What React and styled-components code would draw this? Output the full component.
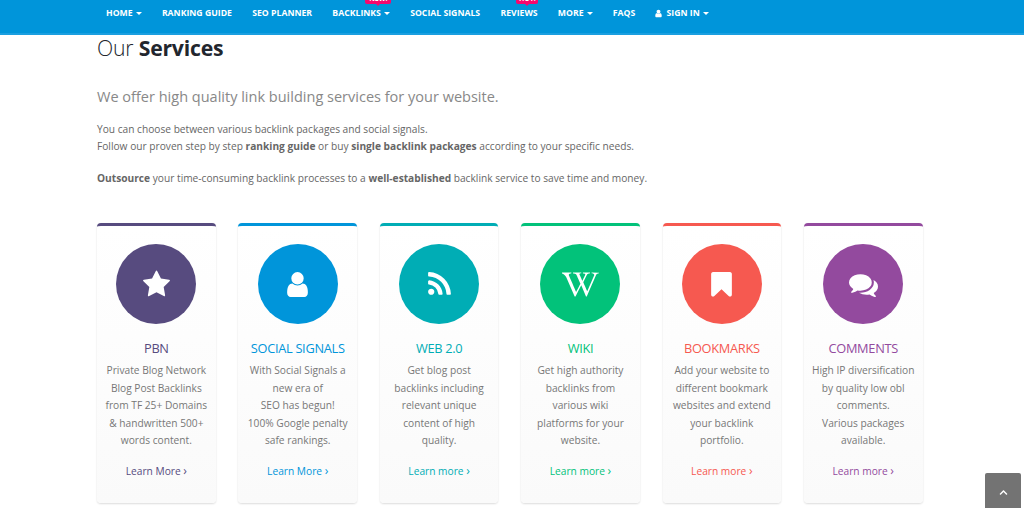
import React from 'react';
import styled, { createGlobalStyle } from 'styled-components';
import { FaWikipediaW, FaChevronUp } from 'react-icons/fa';

const GlobalStyle = createGlobalStyle`
  html, body {
    margin: 0;
    padding: 0;
    height: 508px;
    overflow: hidden;
    background: #fff;
    font-family: "Open Sans", "Liberation Sans", sans-serif;
  }
`;

const Page = styled.div`
  position: relative;
  height: 508px;
  overflow: hidden;
`;

const Navbar = styled.nav`
  height: 33px;
  background: #0095da;
  border-bottom: 2px solid #1a9fe0;
  display: flex;
  gap: 20.25px;
  padding-left: 106px;
`;

const NavItem = styled.a`
  position: relative;
  display: flex;
  align-items: center;
  gap: 3px;
  height: 26px;
  font-size: 8.7px;
  font-weight: 700;
  color: #fff;
  text-transform: uppercase;
  white-space: nowrap;
`;

const Caret = styled.span`
  width: 0;
  height: 0;
  border-left: 3px solid transparent;
  border-right: 3px solid transparent;
  border-top: 3px solid #fff;
`;

const UserIcon = styled.span`
  display: flex;
  margin: 0 1px 0 -2px;
`;

const Badge = styled.span`
  position: absolute;
  top: -7px;
  left: ${(p) => p.$left}px;
  width: ${(p) => p.$width}px;
  height: 11px;
  border-radius: 2px;
  background: #f5086e;
  color: #fff;
  font-size: 7px;
  line-height: 11px;
  text-align: center;

  &::after {
    content: '';
    position: absolute;
    left: 50%;
    bottom: -2px;
    margin-left: -2px;
    border-left: 2px solid transparent;
    border-right: 2px solid transparent;
    border-top: 2px solid #f5086e;
  }
`;

const Content = styled.main`
  padding: 0 101px 0 97px;
`;

const Title = styled.h1`
  margin: 0;
  font-size: 21.2px;
  line-height: 25px;
  font-weight: 300;
  color: #22262e;
  letter-spacing: -0.2px;

  strong {
    font-weight: 700;
  }
`;

const Lead = styled.p`
  margin: 26px 0 0;
  font-size: 14.53px;
  line-height: 20px;
  font-weight: 400;
  color: #888;
`;

const Text = styled.p`
  margin: ${(p) => p.$top}px 0 0;
  font-size: 10.18px;
  line-height: 17px;
  color: #666;

  strong {
    font-weight: 700;
  }
`;

const CardGrid = styled.div`
  display: grid;
  grid-template-columns: repeat(6, 118.7px);
  column-gap: 22.7px;
  margin-top: 36px;
`;

const Card = styled.article`
  height: 280px;
  box-sizing: border-box;
  display: flex;
  flex-direction: column;
  align-items: center;
  padding-top: 18px;
  border-top: 3px solid ${(p) => p.$color};
  border-radius: 4px;
  background: linear-gradient(#fff, #fafafa);
  box-shadow: 0 1px 2px rgba(0, 0, 0, 0.14);
  color: ${(p) => p.$color};
`;

const Circle = styled.div`
  width: 80px;
  height: 80px;
  flex: none;
  border-radius: 50%;
  background: ${(p) => p.$color};
  color: #fff;
  display: flex;
  align-items: center;
  justify-content: center;
`;

const CardTitle = styled.h3`
  margin: 15px 0 0;
  font-size: 12.8px;
  line-height: 18px;
  font-weight: 400;
  letter-spacing: -0.3px;
  white-space: nowrap;
`;

const CardText = styled.p`
  margin: 5px 0 0;
  width: 118px;
  font-size: 10.2px;
  line-height: 17.5px;
  color: #777;
  text-align: center;
  white-space: pre-line;
`;

const LearnLink = styled.a`
  margin-top: 14px;
  font-size: 10.2px;
  line-height: 14px;
  white-space: nowrap;
`;

const Arrow = styled.span`
  font-size: 12px;
`;

const BackToTop = styled.a`
  position: absolute;
  right: 3px;
  bottom: 0;
  width: 36px;
  height: 35px;
  box-sizing: border-box;
  padding-top: 3px;
  border-radius: 2px 2px 0 0;
  background: #737373;
  color: #fff;
  display: flex;
  align-items: center;
  justify-content: center;
  font-size: 9px;
`;

// Font Awesome 4 glyphs, the package only ships the newer, rounder ones
const Glyph = ({ d, size = 29 }) => (
  <svg width={size} height={size} viewBox="0 0 1792 1792" fill="currentColor">
    <path d={d} />
  </svg>
);

const userPath = 'M1536 1399q0 109-62.5 187t-150.5 78h-854q-88 0-150.5-78t-62.5-187q0-85 8.5-160.5t31.5-152 58.5-131 94-89 134.5-34.5q131 128 313 128t313-128q76 0 134.5 34.5t94 89 58.5 131 31.5 152 8.5 160.5zm-256-887q0 159-112.5 271.5t-271.5 112.5-271.5-112.5-112.5-271.5 112.5-271.5 271.5-112.5 271.5 112.5 112.5 271.5z';
const starPath = 'M1728 647q0 22-26 48l-363 354 86 500q1 7 1 20 0 21-10.5 35.5t-30.5 14.5q-19 0-40-12l-449-236-449 236q-22 12-40 12-21 0-31.5-14.5t-10.5-35.5q0-6 2-20l86-500-364-354q-25-27-25-48 0-37 56-46l502-73 225-455q19-41 49-41t49 41l225 455 502 73q56 9 56 46z';
const rssPath = 'M576 1344q0 80-56 136t-136 56-136-56-56-136 56-136 136-56 136 56 56 136zm512 123q2 28-17 48-18 21-47 21h-135q-25 0-43-16.5t-20-41.5q-22-229-184.5-391.5t-391.5-184.5q-25-2-41.5-20t-16.5-43v-135q0-29 21-47 17-17 43-17h5q160 13 306 80.5t259 181.5q114 113 181.5 259t80.5 306zm512 2q2 27-18 47-18 20-46 20h-143q-26 0-44.5-17.5t-19.5-42.5q-12-215-101-408.5t-231.5-336-336-231.5-408.5-102q-25-1-42.5-19.5t-17.5-43.5v-143q0-28 20-46 18-18 44-18h3q262 13 501.5 120t425.5 294q187 186 294 425.5t120 501.5z';
const bookmarkPath = 'M1420 128q23 0 44 9 33 13 52.5 41t19.5 62v1289q0 34-19.5 62t-52.5 41q-19 8-44 8-48 0-83-32l-441-424-441 424q-36 33-83 33-23 0-44-9-33-13-52.5-41t-19.5-62v-1289q0-34 19.5-62t52.5-41q21-9 44-9h1048z';
const commentsPath = 'M1408 768q0 139-94 257t-256.5 186.5-353.5 68.5q-86 0-176-16-124 88-278 128-36 9-86 16h-3q-11 0-20.5-8t-11.5-21q-1-3-1-6.5t.5-6.5 2-6l2.5-5 3.5-5.5 4-5 4.5-5 4-4.5q5-6 23-25t26-29.5 22.5-29 25-38.5 20.5-44q-124-72-195-177t-71-224q0-139 94-257t256.5-186.5 353.5-68.5 353.5 68.5 256.5 186.5 94 257zm384 256q0 120-71 224.5t-195 176.5q10 24 20.5 44t25 38.5 22.5 29 26 29.5 23 25q1 1 4 4.5t4.5 5 4 5 3.5 5.5l2.5 5 2 6 .5 6.5-1 6.5q-3 14-13 22t-22 7q-50-7-86-16-154-40-278-128-90 16-176 16-271 0-472-132 58 4 88 4 161 0 309-45t264-129q125-92 192-212t67-254q0-77-23-152 129 71 204 178t75 230z';

const navItems = [
  { label: 'Home', caret: true },
  { label: 'Ranking Guide' },
  { label: 'SEO Planner' },
  { label: 'Backlinks', caret: true, badge: { text: 'NEW!', left: 33, width: 26 } },
  { label: 'Social Signals' },
  { label: 'Reviews', badge: { text: 'HOT!', left: 16, width: 22 } },
  { label: 'More', caret: true },
  { label: 'FAQs' },
  { label: 'Sign In', caret: true, user: true },
];

const services = [
  {
    title: 'PBN',
    color: '#574b7f',
    icon: <Glyph d={starPath} />,
    text: 'Private Blog Network\nBlog Post Backlinks\nfrom TF 25+ Domains\n& handwritten 500+\nwords content.',
    link: 'Learn More',
  },
  {
    title: 'SOCIAL SIGNALS',
    color: '#0095da',
    icon: <Glyph d={userPath} />,
    text: 'With Social Signals a\nnew era of\nSEO has begun!\n100% Google penalty\nsafe rankings.',
    link: 'Learn More',
  },
  {
    title: 'WEB 2.0',
    color: '#00adb5',
    icon: <Glyph d={rssPath} />,
    text: 'Get blog post\nbacklinks including\nrelevant unique\ncontent of high\nquality.',
    link: 'Learn more',
  },
  {
    title: 'WIKI',
    color: '#02c27a',
    icon: <FaWikipediaW size={37} />,
    text: 'Get high authority\nbacklinks from\nvarious wiki\nplatforms for your\nwebsite.',
    link: 'Learn more',
  },
  {
    title: 'BOOKMARKS',
    color: '#f65950',
    icon: <Glyph d={bookmarkPath} />,
    text: 'Add your website to\ndifferent bookmark\nwebsites and extend\nyour backlink\nportfolio.',
    link: 'Learn more',
  },
  {
    title: 'COMMENTS',
    color: '#934a9e',
    icon: <Glyph d={commentsPath} />,
    text: 'High IP diversification\nby quality low obl\ncomments.\nVarious packages\navailable.',
    link: 'Learn more',
  },
];

export default function App() {
  return (
    <Page>
      <GlobalStyle />
      <Navbar>
        {navItems.map((item) => (
          <NavItem key={item.label}>
            {item.user && <UserIcon><Glyph d={userPath} size={9} /></UserIcon>}
            {item.label}
            {item.caret && <Caret />}
            {item.badge && (
              <Badge $left={item.badge.left} $width={item.badge.width}>{item.badge.text}</Badge>
            )}
          </NavItem>
        ))}
      </Navbar>
      <Content>
        <Title>Our <strong>Services</strong></Title>
        <Lead>We offer high quality link building services for your website.</Lead>
        <Text $top={15}>
          You can choose between various backlink packages and social signals.
          <br />
          Follow our proven step by step <strong>ranking guide</strong> or buy <strong>single backlink packages</strong> according to your specific needs.
        </Text>
        <Text $top={15}>
          <strong>Outsource</strong> your time-consuming backlink processes to a <strong>well-established</strong> backlink service to save time and money.
        </Text>
        <CardGrid>
          {services.map((s) => (
            <Card key={s.title} $color={s.color}>
              <Circle $color={s.color}>{s.icon}</Circle>
              <CardTitle>{s.title}</CardTitle>
              <CardText>{s.text}</CardText>
              <LearnLink>{s.link} <Arrow>›</Arrow></LearnLink>
            </Card>
          ))}
        </CardGrid>
      </Content>
      <BackToTop><FaChevronUp /></BackToTop>
    </Page>
  );
}
